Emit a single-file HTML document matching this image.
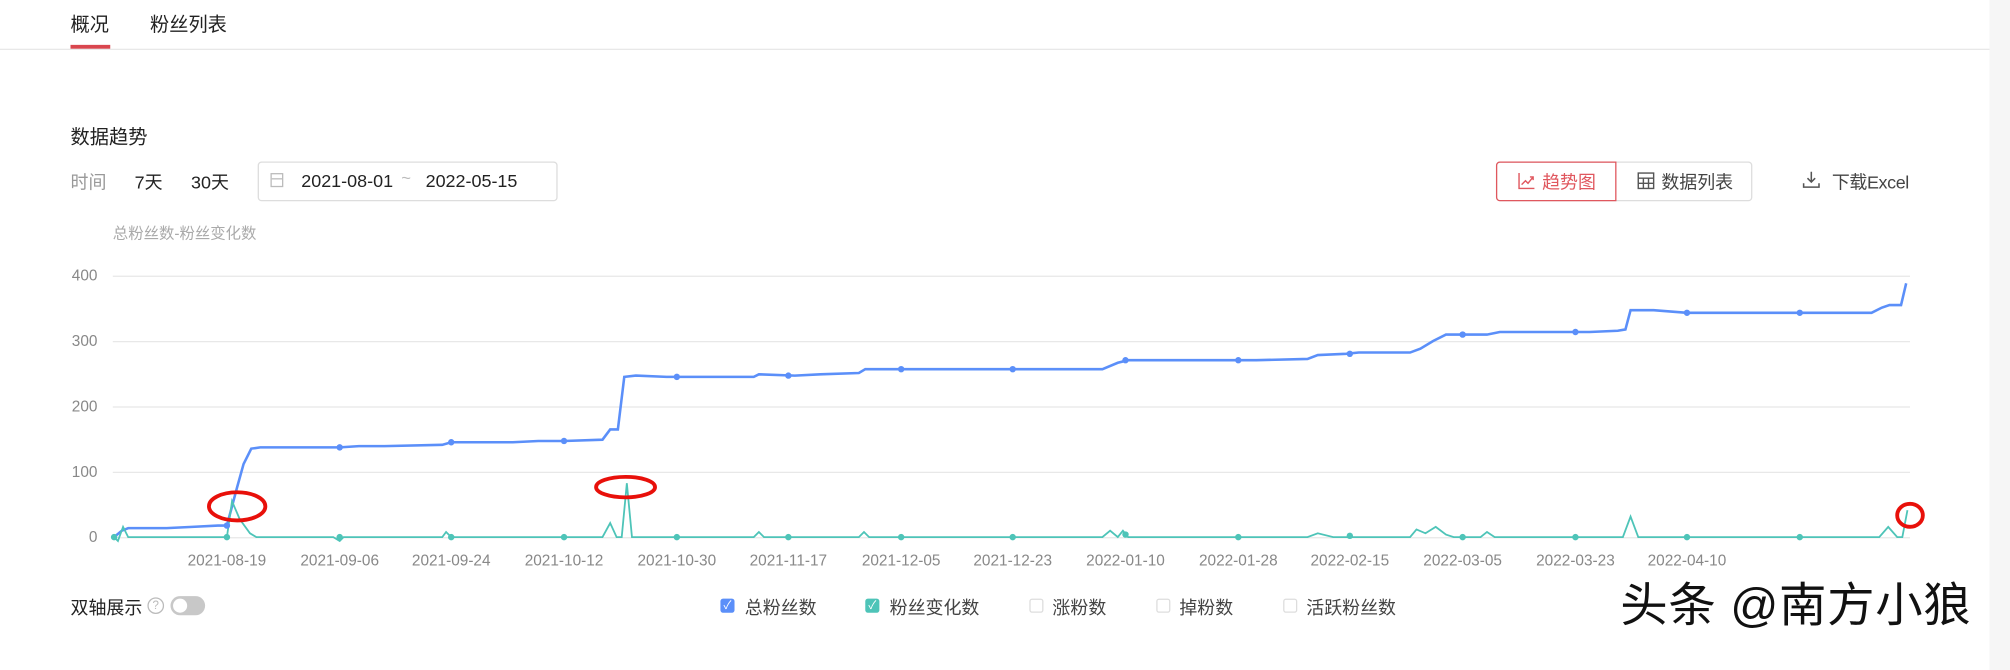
<!DOCTYPE html>
<html><head><meta charset="utf-8"><style>
html,body{margin:0;padding:0;background:#fff;}
body{width:2010px;height:670px;overflow:hidden;position:relative;font-family:"Liberation Sans","Noto Sans CJK SC",sans-serif;}
#w{position:absolute;left:0;top:0;width:1568px;height:523px;transform:scale(1.28189);transform-origin:0 0;}
.a{position:absolute;white-space:nowrap;}
</style></head><body><div id="w">
<div class="a" style="left:1552px;top:0;width:16px;height:523px;background:#f6f6f6"></div>
<div class="a" style="left:55px;top:8px;font-size:15px;color:#222">概况</div>
<div class="a" style="left:117px;top:8px;font-size:15px;color:#222">粉丝列表</div>
<div class="a" style="left:0;top:38px;width:1552px;height:1px;background:#e8e8e8"></div>
<div class="a" style="left:55px;top:35px;width:31px;height:3px;background:#d9464e"></div>
<div class="a" style="left:55px;top:96px;font-size:15px;color:#222">数据趋势</div>
<div class="a" style="left:55px;top:132px;font-size:14px;color:#999">时间</div>
<div class="a" style="left:105px;top:132px;font-size:14px;color:#222">7天</div>
<div class="a" style="left:149px;top:132px;font-size:14px;color:#222">30天</div>
<div class="a" style="left:201px;top:126px;width:232px;height:29px;border:1px solid #ddd;border-radius:3px"></div>
<div class="a" style="left:211px;top:135px;width:10px;height:11px;border:1px solid #bbb;box-sizing:border-box"><div style="margin-top:3px;height:1px;background:#bbb"></div></div>
<div class="a" style="left:235px;top:133px;font-size:14px;color:#222">2021-08-01</div>
<div class="a" style="left:313px;top:131px;font-size:13px;color:#bbb">~</div>
<div class="a" style="left:332px;top:133px;font-size:14px;color:#222">2022-05-15</div>
<div class="a" style="left:1167px;top:126px;width:198px;height:29px;border:1px solid #ddd;border-radius:3px"></div>
<div class="a" style="left:1167px;top:126px;width:92px;height:29px;border:1px solid #e0575e;border-radius:3px 0 0 3px"></div>
<svg class="a" style="left:1184px;top:134px" width="14" height="14" viewBox="0 0 14 14" fill="none" stroke="#e0575e" stroke-width="1.1"><path d="M1 1V13H13M3 10L6 7L8 9L12 4M9.5 4H12V6.5"/></svg>
<div class="a" style="left:1203px;top:132px;font-size:14px;color:#e0575e">趋势图</div>
<svg class="a" style="left:1277px;top:134px" width="14" height="14" viewBox="0 0 14 14" fill="none" stroke="#555" stroke-width="1.1"><rect x="1" y="1" width="12" height="12"/><path d="M1 5H13M1 9H13M5 5V13M9 5V13"/></svg>
<div class="a" style="left:1296px;top:132px;font-size:14px;color:#444">数据列表</div>
<svg class="a" style="left:1406px;top:133px" width="14" height="14" viewBox="0 0 14 14" fill="none" stroke="#555" stroke-width="1.2"><path d="M7 1V9M4 6L7 9L10 6M1 10V13H13V10"/></svg>
<div class="a" style="left:1429px;top:132px;font-size:14px;color:#444;letter-spacing:-0.3px">下载Excel</div>
<div class="a" style="left:88px;top:173px;font-size:12px;color:#aaa">总粉丝数-粉丝变化数</div>
<svg class="a" style="left:0;top:0" width="1568" height="523">
<g stroke="#e8e8e8" stroke-width="1"><path d="M88 215.5H1490M88 266.5H1490M88 317.5H1490M88 368.5H1490M88 419.5H1490"/></g>
<g font-size="12" fill="#888" text-anchor="end" font-family="Liberation Sans,sans-serif"><text x="76" y="219">400</text><text x="76" y="270">300</text><text x="76" y="321">200</text><text x="76" y="372">100</text><text x="76" y="423">0</text></g>
<g font-size="12" fill="#888" text-anchor="middle" font-family="Liberation Sans,sans-serif">
<text x="177" y="441">2021-08-19</text><text x="265" y="441">2021-09-06</text><text x="352" y="441">2021-09-24</text><text x="440" y="441">2021-10-12</text><text x="528" y="441">2021-10-30</text><text x="615" y="441">2021-11-17</text><text x="703" y="441">2021-12-05</text><text x="790" y="441">2021-12-23</text><text x="878" y="441">2022-01-10</text><text x="966" y="441">2022-01-28</text><text x="1053" y="441">2022-02-15</text><text x="1141" y="441">2022-03-05</text><text x="1229" y="441">2022-03-23</text><text x="1316" y="441">2022-04-10</text></g>
<path fill="none" stroke="#5b8ff9" stroke-width="2" d="M89 419L95 414L100 412L130 412L150 411L170 410L177 410L185 380L190 362L196 350L203 349L265 349L280 348L300 348L345 347L352 345L380 345L400 345L420 344L440 344L470 343L476 335L482 335L487 294L496 293L520 294L560 294L588 294L592 292L620 293L640 292L670 291L675 288L700 288L740 288L790 288L860 288L872 283L880 281L900 281L940 281L980 281L1020 280L1028 277L1050 276L1060 275L1100 275L1108 272L1118 266L1128 261L1138 261L1160 261L1170 259L1200 259L1229 259L1240 259L1262 258L1268 257L1272 242L1290 242L1316 244L1340 244L1380 244L1404 244L1440 244L1460 244L1468 240L1474 238L1480 238L1483 238L1487 221"/>
<path fill="none" stroke="#4ec4b8" stroke-width="1.4" d="M89 419L92 422L96 411L100 419L177 419L181 391L187 405L195 416L200 419L260 419L265 422L268 419L345 419L348 415L352 419L470 419L476 408L481 419L485 419L489 377L493 419L588 419L592 415L596 419L670 419L674 415L678 419L860 419L866 414L872 419L876 414L880 419L1020 419L1028 416L1040 419L1100 419L1105 413L1112 416L1120 411L1128 417L1134 419L1155 419L1160 415L1166 419L1266 419L1272 403L1278 419L1466 419L1473 411L1480 419L1484 419L1488 398"/>
<g fill="#5b8ff9"><circle cx="177" cy="410" r="2.5"/><circle cx="265" cy="349" r="2.5"/><circle cx="352" cy="345" r="2.5"/><circle cx="440" cy="344" r="2.5"/><circle cx="528" cy="294" r="2.5"/><circle cx="615" cy="293" r="2.5"/><circle cx="703" cy="288" r="2.5"/><circle cx="790" cy="288" r="2.5"/><circle cx="878" cy="281" r="2.5"/><circle cx="966" cy="281" r="2.5"/><circle cx="1053" cy="276" r="2.5"/><circle cx="1141" cy="261" r="2.5"/><circle cx="1229" cy="259" r="2.5"/><circle cx="1316" cy="244" r="2.5"/><circle cx="1404" cy="244" r="2.5"/></g>
<g fill="#4ec4b8"><circle cx="89" cy="419" r="2.5"/><circle cx="177" cy="419" r="2.5"/><circle cx="265" cy="419" r="2.5"/><circle cx="352" cy="419" r="2.5"/><circle cx="440" cy="419" r="2.5"/><circle cx="528" cy="419" r="2.5"/><circle cx="615" cy="419" r="2.5"/><circle cx="703" cy="419" r="2.5"/><circle cx="790" cy="419" r="2.5"/><circle cx="878" cy="417" r="2.5"/><circle cx="966" cy="419" r="2.5"/><circle cx="1053" cy="418" r="2.5"/><circle cx="1141" cy="419" r="2.5"/><circle cx="1229" cy="419" r="2.5"/><circle cx="1316" cy="419" r="2.5"/><circle cx="1404" cy="419" r="2.5"/></g>
<g fill="none" stroke="#e8100a" stroke-width="3"><ellipse cx="185" cy="395" rx="22" ry="11"/><ellipse cx="488" cy="380" rx="23" ry="8"/><ellipse cx="1490" cy="402" rx="10" ry="9"/></g>
</svg>
<div class="a" style="left:55px;top:464px;font-size:14px;color:#222">双轴展示</div>
<div class="a" style="left:115px;top:466px;width:11px;height:11px;border:1px solid #bbb;border-radius:50%;font-size:9px;line-height:11px;text-align:center;color:#bbb">?</div>
<div class="a" style="left:133px;top:465px;width:27px;height:15px;border-radius:8px;background:#c8c8c8"><div style="margin:2px;width:11px;height:11px;border-radius:50%;background:#fff"></div></div>
<div class="a" style="left:562px;top:467px;width:11px;height:11px;border-radius:2px;background:#5b8ff9;color:#fff;font-size:9px;line-height:11px;text-align:center">✓</div>
<div class="a" style="left:581px;top:464px;font-size:14px;color:#444">总粉丝数</div>
<div class="a" style="left:675px;top:467px;width:11px;height:11px;border-radius:2px;background:#4ec4b8;color:#fff;font-size:9px;line-height:11px;text-align:center">✓</div>
<div class="a" style="left:694px;top:464px;font-size:14px;color:#444">粉丝变化数</div>
<div class="a" style="left:803px;top:467px;width:9px;height:9px;border:1px solid #ddd;border-radius:2px"></div>
<div class="a" style="left:821px;top:464px;font-size:14px;color:#444">涨粉数</div>
<div class="a" style="left:902px;top:467px;width:9px;height:9px;border:1px solid #ddd;border-radius:2px"></div>
<div class="a" style="left:920px;top:464px;font-size:14px;color:#444">掉粉数</div>
<div class="a" style="left:1001px;top:467px;width:9px;height:9px;border:1px solid #ddd;border-radius:2px"></div>
<div class="a" style="left:1019px;top:464px;font-size:14px;color:#444">活跃粉丝数</div>
<div class="a" style="left:1264px;top:442px;font-size:37px;color:#111;letter-spacing:0.5px">头条 @南方小狼</div>
</div></body></html>
